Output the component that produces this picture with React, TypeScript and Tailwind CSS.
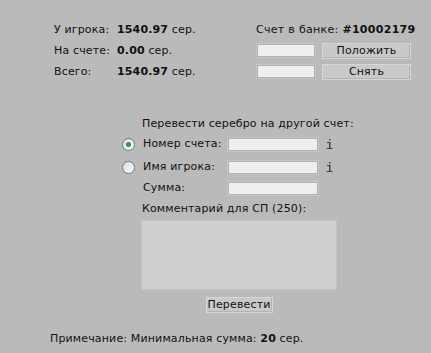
import React from "react";

function Info() {
  return (
    <svg width="7" height="10" viewBox="0 0 7 10" className="ml-[7px]">
      <rect x="3" y="0" width="1.5" height="1.5" fill="#444" />
      <rect x="1" y="3" width="3.5" height="1" fill="#444" />
      <rect x="3" y="3" width="1.5" height="6" fill="#444" />
      <rect x="0.5" y="9" width="6" height="1" fill="#444" />
    </svg>
  );
}

function Radio({ checked }: { checked?: boolean }) {
  return (
    <div className="w-[13px] h-[13px] rounded-full border border-[#6f7780] bg-[linear-gradient(135deg,#d8dde2,#fbfcfd)] flex items-center justify-center shrink-0">
      {checked && <div className="w-[5px] h-[5px] rounded-full bg-[#2f9a2f]" />}
    </div>
  );
}

const inputCls =
  "h-[15px] bg-[#efefef] border border-[#c6c6c6] shadow-[0_0_0_1px_#b0b0b0_inset] box-border";
const btnCls =
  "h-[16px] bg-[#c9c9c9] border border-[#d6d6d6] shadow-[inset_-1px_-1px_0_#b4b4b4] flex items-center justify-center box-border text-[11px]";

export default function App() {
  return (
    <div
      className="w-[431px] h-[353px] bg-[#bababa] text-[#111] text-[11px] leading-[14px] tracking-[0.15px] overflow-hidden"
      style={{ fontFamily: '"DejaVu Sans", Verdana, sans-serif' }}
    >
      <div className="flex pt-[19px]">
        <div className="ml-[54px] grid grid-cols-[63px_auto] auto-rows-[21px] items-center">
          <span>У игрока:</span>
          <span>
            <b>1540.97</b> сер.
          </span>
          <span>На счете:</span>
          <span>
            <b>0.00</b> сер.
          </span>
          <span>Всего:</span>
          <span>
            <b>1540.97</b> сер.
          </span>
        </div>
        <div className="ml-auto mr-[20px] flex flex-col w-[155px]">
          <div className="h-[21px] flex items-center whitespace-nowrap tracking-[0.3px]">
            Счет в банке:&nbsp;<b>#10002179</b>
          </div>
          <div className="h-[21px] flex items-center">
            <div className={inputCls + " w-[60px]"} />
            <div className={btnCls + " ml-[6px] w-[89px]"}>Положить</div>
          </div>
          <div className="h-[21px] flex items-center">
            <div className={inputCls + " w-[60px]"} />
            <div className={btnCls + " ml-[6px] w-[89px]"}>Снять</div>
          </div>
        </div>
      </div>

      <div className="ml-[122px] flex flex-col">
        <div className="mt-[35px] h-[14px] pl-[20px] whitespace-nowrap">
          Перевести серебро на другой счет:
        </div>
        <div className="mt-[5px] h-[16px] flex items-center">
          <Radio checked />
          <span className="ml-[8px] w-[84px]">Номер счета:</span>
          <div className={inputCls + " w-[92px]"} />
          <Info />
        </div>
        <div className="mt-[7px] h-[16px] flex items-center">
          <Radio />
          <span className="ml-[8px] w-[84px]">Имя игрока:</span>
          <div className={inputCls + " w-[92px]"} />
          <Info />
        </div>
        <div className="mt-[5px] h-[16px] flex items-center">
          <div className="w-[13px]" />
          <span className="ml-[8px] w-[84px]">Сумма:</span>
          <div className={inputCls + " w-[92px]"} />
        </div>
        <div className="mt-[6px] h-[14px] pl-[20px] whitespace-nowrap">
          Комментарий для СП (250):
        </div>
        <div className="mt-[4px] ml-[19px] w-[196px] h-[70px] bg-[#cfcfcf] border border-[#c4c4c4] box-border" />
        <div className="mt-[7px] ml-[19px] w-[196px] flex justify-center">
          <div className={btnCls + " w-[67px]"}>Перевести</div>
        </div>
      </div>

      <div className="mt-[19px] ml-[50px] h-[14px] whitespace-nowrap">
        Примечание: Минимальная сумма: <b>20</b> сер.
      </div>
    </div>
  );
}
